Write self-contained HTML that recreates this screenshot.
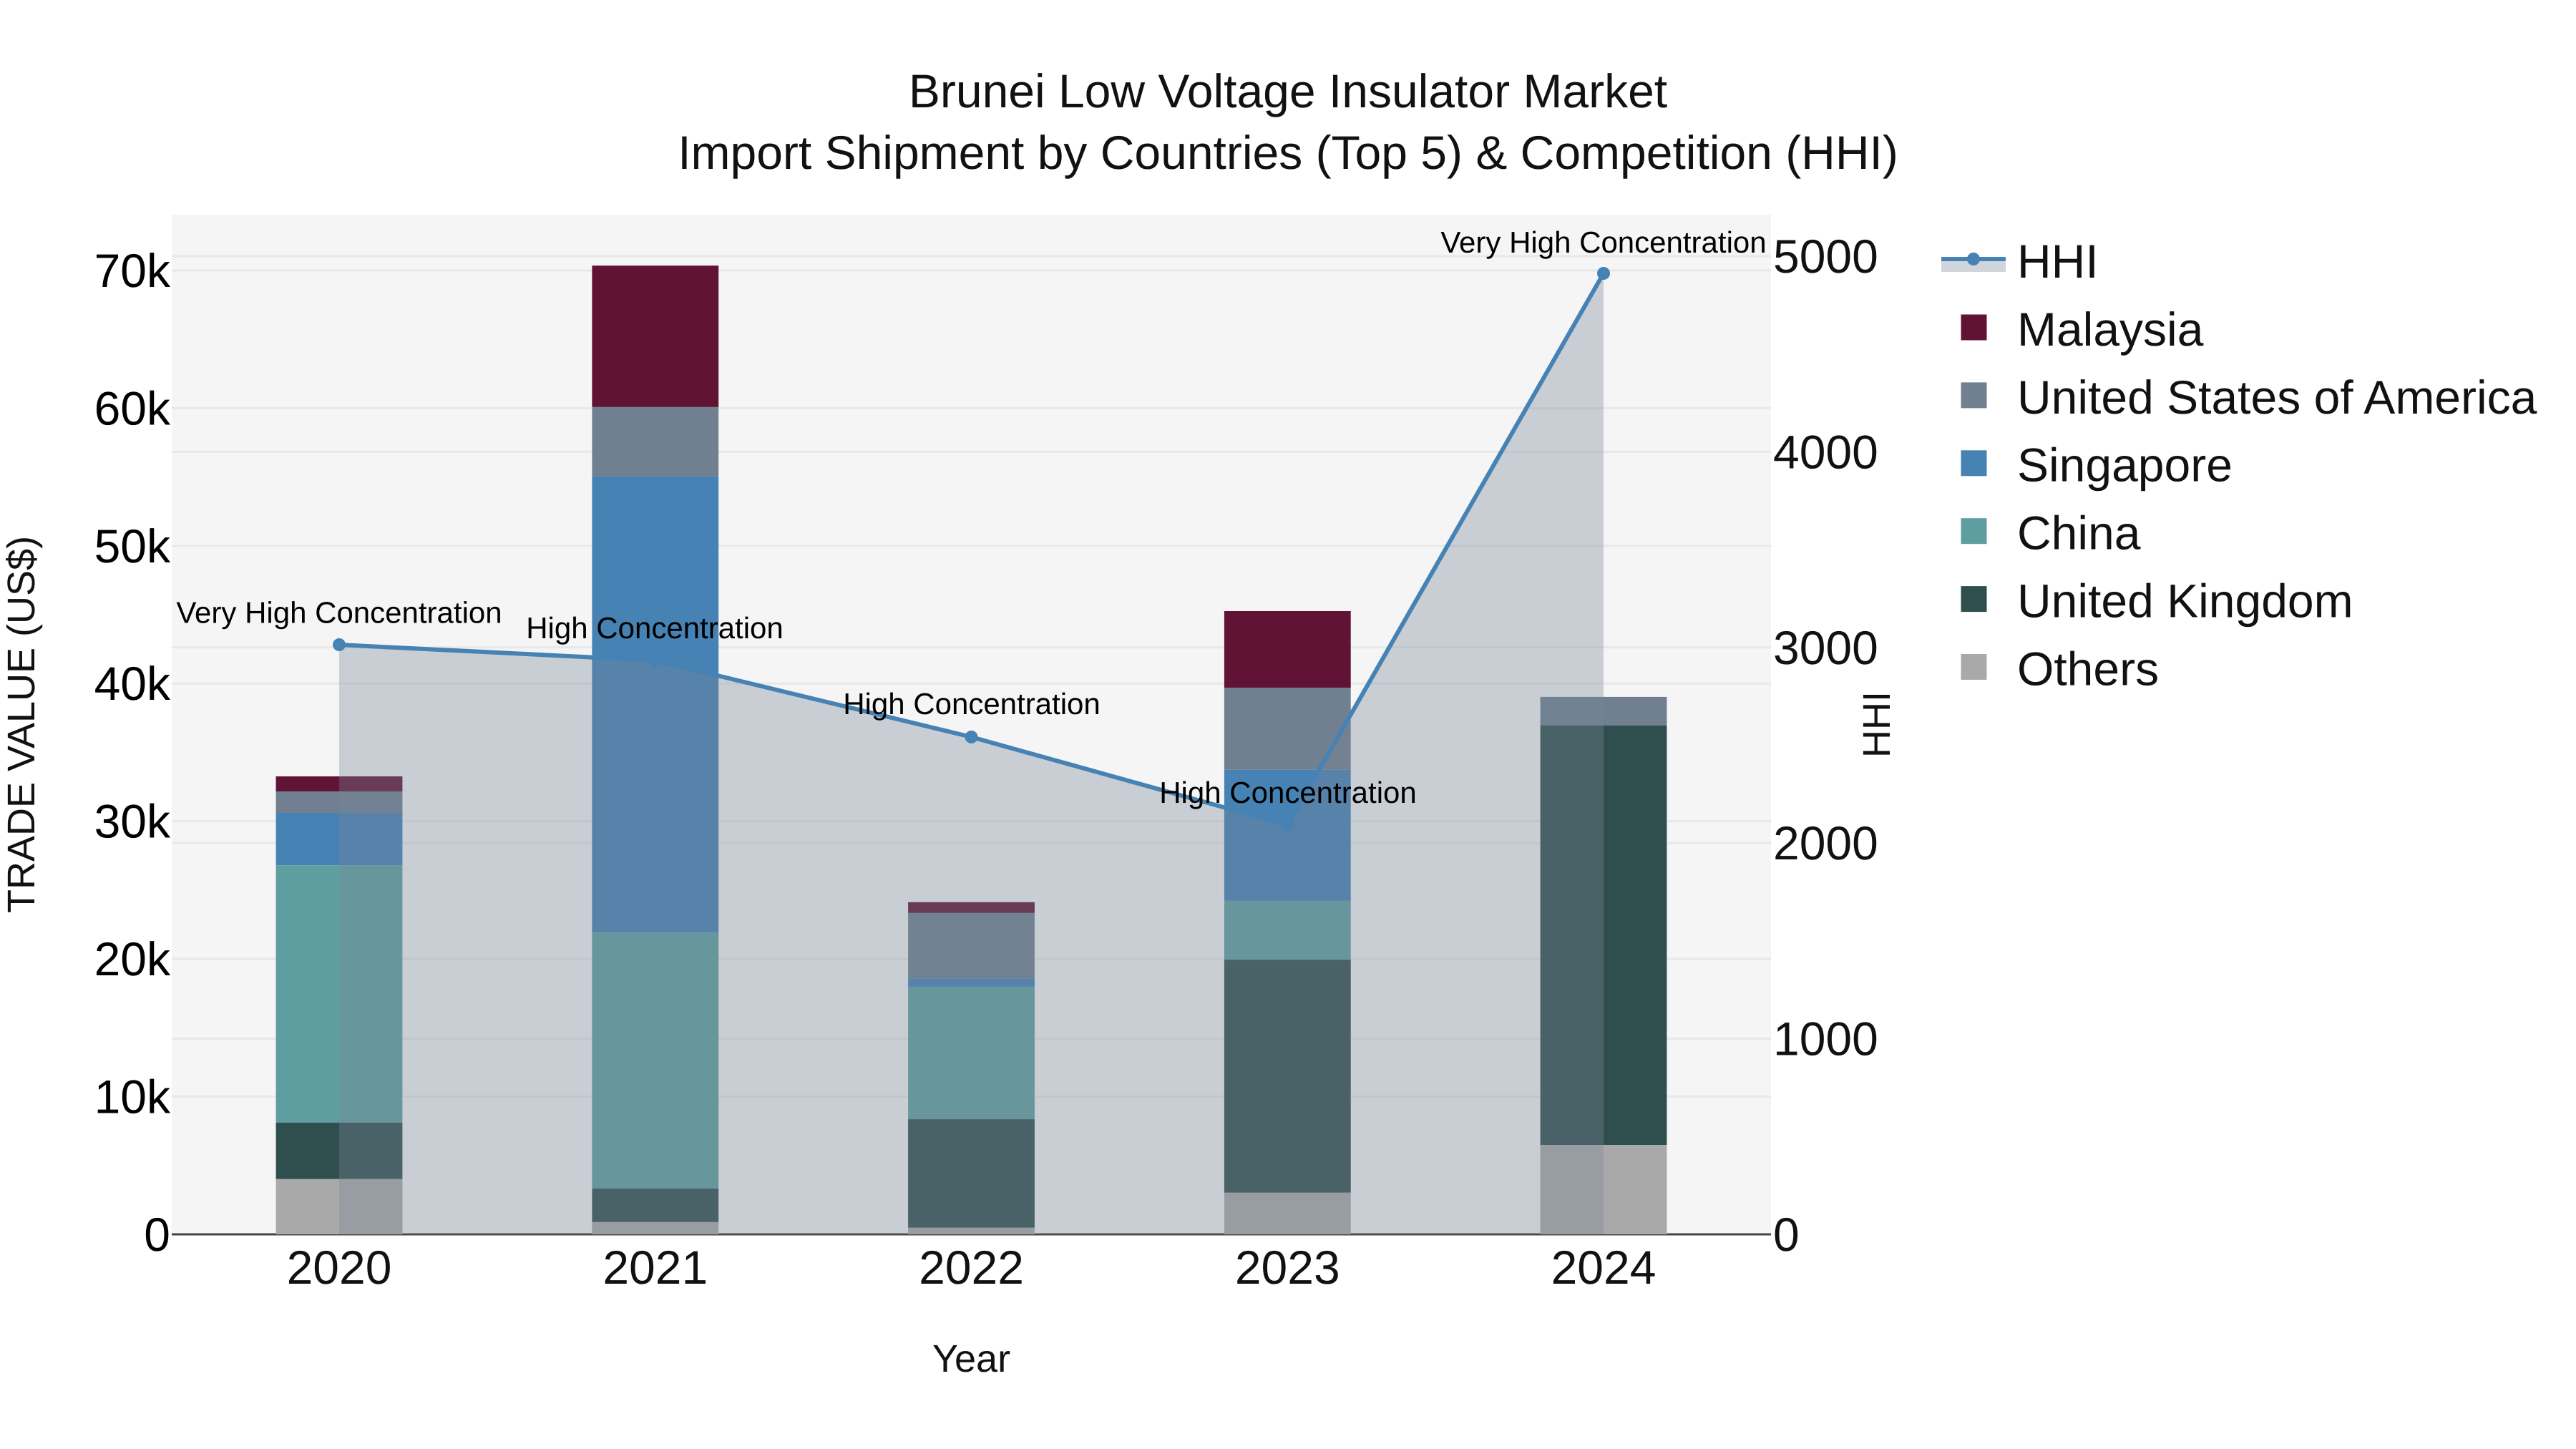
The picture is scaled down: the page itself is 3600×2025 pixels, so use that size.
<!DOCTYPE html>
<html><head><meta charset="utf-8"><style>
html,body{margin:0;padding:0;background:#fff;width:3600px;height:2025px;overflow:hidden}
svg{display:block}
text{font-family:"Liberation Sans",sans-serif;text-rendering:geometricPrecision}
.t{font-size:66px;fill:#111}
.k{font-size:66px;fill:#000}
.a{font-size:42px;fill:#000;text-anchor:middle}
.x{font-size:54px;fill:#111}
</style></head><body>
<svg width="3600" height="2025" viewBox="0 0 3600 2025" xmlns="http://www.w3.org/2000/svg">
<rect width="3600" height="2025" fill="#fff"/>
<rect x="240" y="300" width="2235" height="1425" fill="#f5f5f5"/>
<g stroke="#e8e8e8" stroke-width="3">
<path d="M240 378H2475M240 570.4H2475M240 762.8H2475M240 955.2H2475M240 1147.6H2475M240 1340H2475M240 1532.4H2475"/>
<path d="M240 358H2475M240 631.4H2475M240 904.8H2475M240 1178.2H2475M240 1451.6H2475"/>
</g>
<path d="M240 1725H2475" stroke="#444" stroke-width="3"/>
<!-- bars -->
<g>
<rect x="385.6" y="1085" width="176.8" height="21" fill="#611335"/>
<rect x="385.6" y="1106" width="176.8" height="30" fill="#708090"/>
<rect x="385.6" y="1136" width="176.8" height="73.2" fill="#4682b4"/>
<rect x="385.6" y="1209.2" width="176.8" height="359.6" fill="#5f9ea0"/>
<rect x="385.6" y="1568.8" width="176.8" height="79" fill="#2f4f4f"/>
<rect x="385.6" y="1647.8" width="176.8" height="77.2" fill="#a9a9a9"/>

<rect x="827.4" y="371.2" width="176.8" height="197.7" fill="#611335"/>
<rect x="827.4" y="568.9" width="176.8" height="96.3" fill="#708090"/>
<rect x="827.4" y="665.2" width="176.8" height="638.1" fill="#4682b4"/>
<rect x="827.4" y="1303.3" width="176.8" height="357.6" fill="#5f9ea0"/>
<rect x="827.4" y="1660.9" width="176.8" height="47" fill="#2f4f4f"/>
<rect x="827.4" y="1707.9" width="176.8" height="17.1" fill="#a9a9a9"/>

<rect x="1269.1" y="1260.8" width="176.8" height="15.1" fill="#611335"/>
<rect x="1269.1" y="1275.9" width="176.8" height="91.5" fill="#708090"/>
<rect x="1269.1" y="1367.4" width="176.8" height="11.7" fill="#4682b4"/>
<rect x="1269.1" y="1379.1" width="176.8" height="185" fill="#5f9ea0"/>
<rect x="1269.1" y="1564.1" width="176.8" height="151.7" fill="#2f4f4f"/>
<rect x="1269.1" y="1715.8" width="176.8" height="9.2" fill="#a9a9a9"/>

<rect x="1710.9" y="854" width="176.8" height="107" fill="#611335"/>
<rect x="1710.9" y="961" width="176.8" height="114.8" fill="#708090"/>
<rect x="1710.9" y="1075.8" width="176.8" height="183.1" fill="#4682b4"/>
<rect x="1710.9" y="1258.9" width="176.8" height="82.3" fill="#5f9ea0"/>
<rect x="1710.9" y="1341.2" width="176.8" height="325.6" fill="#2f4f4f"/>
<rect x="1710.9" y="1666.8" width="176.8" height="58.2" fill="#a9a9a9"/>

<rect x="2152.6" y="973.9" width="176.8" height="39.8" fill="#708090"/>
<rect x="2152.6" y="1013.7" width="176.8" height="586.4" fill="#2f4f4f"/>
<rect x="2152.6" y="1600.1" width="176.8" height="124.9" fill="#a9a9a9"/>
</g>
<!-- HHI area + line -->
<polygon points="474,1725 474,901 915.75,923 1357.5,1030 1799.25,1153 2241,382 2241,1725" fill="rgb(119,136,153)" fill-opacity="0.35"/>
<polyline points="474,901 915.75,923 1357.5,1030 1799.25,1153 2241,382" fill="none" stroke="#4682b4" stroke-width="6" stroke-linejoin="round"/>
<g fill="#4682b4">
<circle cx="474" cy="901" r="9"/><circle cx="915.75" cy="923" r="9"/><circle cx="1357.5" cy="1030" r="9"/><circle cx="1799.25" cy="1153" r="9"/><circle cx="2241" cy="382" r="9"/>
</g>
<!-- annotations -->
<text class="a" x="474" y="870.5">Very High Concentration</text>
<text class="a" x="915" y="892">High Concentration</text>
<text class="a" x="1358" y="998">High Concentration</text>
<text class="a" x="1800" y="1122">High Concentration</text>
<text class="a" x="2241" y="353">Very High Concentration</text>
<!-- title -->
<text class="t" x="1800" y="150" text-anchor="middle">Brunei Low Voltage Insulator Market</text>
<text class="t" x="1800" y="236" text-anchor="middle">Import Shipment by Countries (Top 5) &amp; Competition (HHI)</text>
<!-- left ticks -->
<g class="k" text-anchor="end">
<text class="k" x="238" y="401">70k</text>
<text class="k" x="238" y="593.4">60k</text>
<text class="k" x="238" y="785.8">50k</text>
<text class="k" x="238" y="978.2">40k</text>
<text class="k" x="238" y="1170.6">30k</text>
<text class="k" x="238" y="1363">20k</text>
<text class="k" x="238" y="1555.4">10k</text>
<text class="k" x="238" y="1748">0</text>
</g>
<!-- right ticks -->
<g>
<text class="t" x="2478" y="381">5000</text>
<text class="t" x="2478" y="654.4">4000</text>
<text class="t" x="2478" y="927.8">3000</text>
<text class="t" x="2478" y="1201.2">2000</text>
<text class="t" x="2478" y="1474.6">1000</text>
<text class="t" x="2478" y="1748">0</text>
</g>
<!-- x ticks -->
<g text-anchor="middle">
<text class="t" x="474" y="1794">2020</text>
<text class="t" x="915.75" y="1794">2021</text>
<text class="t" x="1357.5" y="1794">2022</text>
<text class="t" x="1799.25" y="1794">2023</text>
<text class="t" x="2241" y="1794">2024</text>
</g>
<text class="x" x="1357.5" y="1917" text-anchor="middle">Year</text>
<text class="x" transform="translate(48,1012.5) rotate(-90)" text-anchor="middle">TRADE VALUE (US$)</text>
<text class="x" transform="translate(2641,1012.5) rotate(-90)" text-anchor="middle">HHI</text>
<!-- legend -->
<rect x="2713" y="362" width="90" height="18" fill="rgb(119,136,153)" fill-opacity="0.35"/>
<path d="M2713 362H2803" stroke="#4682b4" stroke-width="6"/>
<circle cx="2758" cy="362" r="9" fill="#4682b4"/>
<rect x="2740.5" y="439.5" width="36" height="36" fill="#611335"/>
<rect x="2740.5" y="534.4" width="36" height="36" fill="#708090"/>
<rect x="2740.5" y="629.3" width="36" height="36" fill="#4682b4"/>
<rect x="2740.5" y="724.2" width="36" height="36" fill="#5f9ea0"/>
<rect x="2740.5" y="819.1" width="36" height="36" fill="#2f4f4f"/>
<rect x="2740.5" y="914" width="36" height="36" fill="#a9a9a9"/>
<g>
<text class="t" x="2819" y="388">HHI</text>
<text class="t" x="2819" y="482.9">Malaysia</text>
<text class="t" x="2819" y="577.8">United States of America</text>
<text class="t" x="2819" y="672.7">Singapore</text>
<text class="t" x="2819" y="767.6">China</text>
<text class="t" x="2819" y="862.5">United Kingdom</text>
<text class="t" x="2819" y="957.4">Others</text>
</g>
</svg>
</body></html>
